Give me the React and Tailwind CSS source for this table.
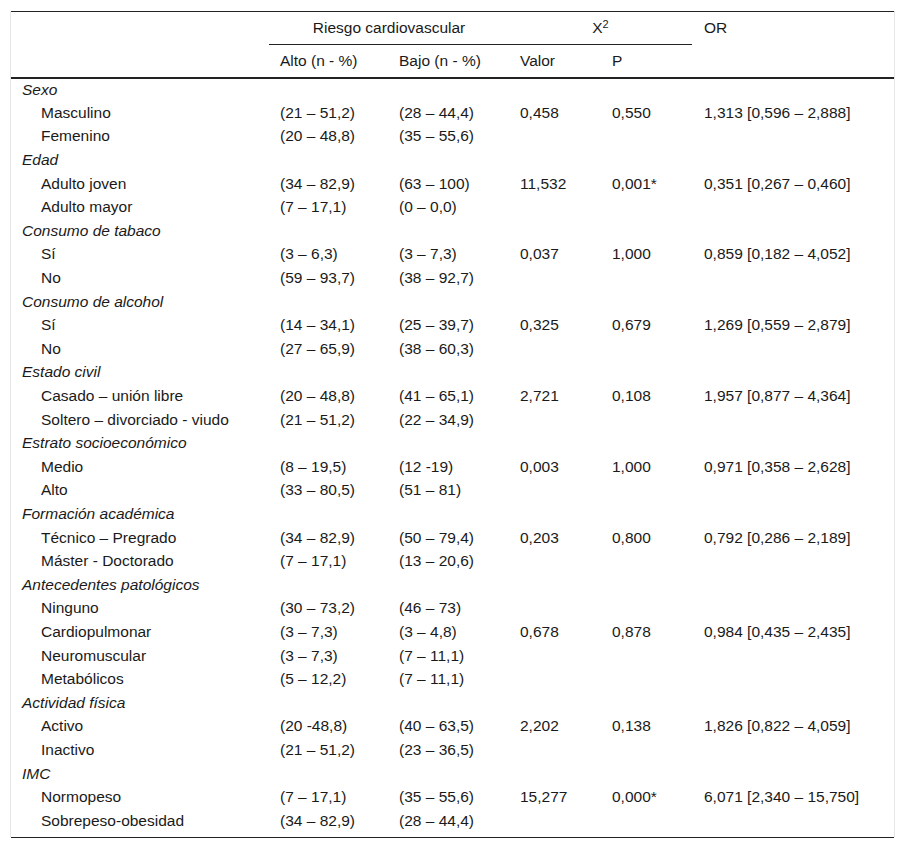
import React from "react";

const groups = [
  { title: "Sexo", rows: [
    ["Masculino", "(21 – 51,2)", "(28 – 44,4)", "0,458", "0,550", "1,313 [0,596 – 2,888]"],
    ["Femenino", "(20 – 48,8)", "(35 – 55,6)", "", "", ""],
  ]},
  { title: "Edad", rows: [
    ["Adulto joven", "(34 – 82,9)", "(63 – 100)", "11,532", "0,001*", "0,351 [0,267 – 0,460]"],
    ["Adulto mayor", "(7 – 17,1)", "(0 – 0,0)", "", "", ""],
  ]},
  { title: "Consumo de tabaco", rows: [
    ["Sí", "(3 – 6,3)", "(3 – 7,3)", "0,037", "1,000", "0,859 [0,182 – 4,052]"],
    ["No", "(59 – 93,7)", "(38 – 92,7)", "", "", ""],
  ]},
  { title: "Consumo de alcohol", rows: [
    ["Sí", "(14 – 34,1)", "(25 – 39,7)", "0,325", "0,679", "1,269 [0,559 – 2,879]"],
    ["No", "(27 – 65,9)", "(38 – 60,3)", "", "", ""],
  ]},
  { title: "Estado civil", rows: [
    ["Casado – unión libre", "(20 – 48,8)", "(41 – 65,1)", "2,721", "0,108", "1,957 [0,877 – 4,364]"],
    ["Soltero – divorciado - viudo", "(21 – 51,2)", "(22 – 34,9)", "", "", ""],
  ]},
  { title: "Estrato socioeconómico", rows: [
    ["Medio", "(8 – 19,5)", "(12 -19)", "0,003", "1,000", "0,971 [0,358 – 2,628]"],
    ["Alto", "(33 – 80,5)", "(51 – 81)", "", "", ""],
  ]},
  { title: "Formación académica", rows: [
    ["Técnico – Pregrado", "(34 – 82,9)", "(50 – 79,4)", "0,203", "0,800", "0,792 [0,286 – 2,189]"],
    ["Máster - Doctorado", "(7 – 17,1)", "(13 – 20,6)", "", "", ""],
  ]},
  { title: "Antecedentes patológicos", rows: [
    ["Ninguno", "(30 – 73,2)", "(46 – 73)", "", "", ""],
    ["Cardiopulmonar", "(3 – 7,3)", "(3 – 4,8)", "0,678", "0,878", "0,984 [0,435 – 2,435]"],
    ["Neuromuscular", "(3 – 7,3)", "(7 – 11,1)", "", "", ""],
    ["Metabólicos", "(5 – 12,2)", "(7 – 11,1)", "", "", ""],
  ]},
  { title: "Actividad física", rows: [
    ["Activo", "(20 -48,8)", "(40 – 63,5)", "2,202", "0,138", "1,826 [0,822 – 4,059]"],
    ["Inactivo", "(21 – 51,2)", "(23 – 36,5)", "", "", ""],
  ]},
  { title: "IMC", rows: [
    ["Normopeso", "(7 – 17,1)", "(35 – 55,6)", "15,277", "0,000*", "6,071 [2,340 – 15,750]"],
    ["Sobrepeso-obesidad", "(34 – 82,9)", "(28 – 44,4)", "", "", ""],
  ]},
];

export default function App() {
  return (
    <div className="bg-white w-[905px] h-[849px] pt-[11px] pl-[10px]" style={{ fontFamily: '"Liberation Sans", Arial, sans-serif' }}>
      <div className="w-[885px] border-x border-[#e6e6e6] text-[15.5px] text-[#1a1a1a] pb-[4px]">
        <table className="w-full table-fixed border-collapse">
          <colgroup>
            <col className="w-[258px]" />
            <col className="w-[119px]" />
            <col className="w-[121px]" />
            <col className="w-[92px]" />
            <col className="w-[91px]" />
            <col />
          </colgroup>
          <thead>
            <tr className="h-[33px] border-t border-[#222]">
              <th className="font-normal"></th>
              <th colSpan={2} className="font-normal text-center border-b border-[#222] align-middle leading-[16px]">Riesgo cardiovascular</th>
              <th colSpan={2} className="font-normal text-center border-b border-[#222] align-middle leading-[16px]">
                X<span className="text-[11px] relative -top-[5px] leading-none">2</span>
              </th>
              <th className="font-normal text-left pl-[12px] align-middle leading-[16px]">OR</th>
            </tr>
            <tr className="h-[33px] border-b-2 border-[#222]">
              <th className="font-normal"></th>
              <th className="font-normal text-left pl-[11px] leading-[16px]">Alto (n - %)</th>
              <th className="font-normal text-left pl-[11px] leading-[16px]">Bajo (n - %)</th>
              <th className="font-normal text-left pl-[11px] leading-[16px]">Valor</th>
              <th className="font-normal text-left pl-[11px] leading-[16px]">P</th>
              <th></th>
            </tr>
          </thead>
          <tbody>
            {groups.map((g) => (
              <React.Fragment key={g.title}>
                <tr className="h-[23.6px]">
                  <td className="italic pl-[11px] leading-[16px]">{g.title}</td>
                  <td></td><td></td><td></td><td></td><td></td>
                </tr>
                {g.rows.map((r, i) => (
                  <tr key={i} className="h-[23.6px]">
                    <td className="pl-[30px] leading-[16px] whitespace-nowrap">{r[0]}</td>
                    <td className="pl-[11px] leading-[16px] whitespace-nowrap">{r[1]}</td>
                    <td className="pl-[11px] leading-[16px] whitespace-nowrap">{r[2]}</td>
                    <td className="pl-[11px] leading-[16px] whitespace-nowrap">{r[3]}</td>
                    <td className="pl-[11px] leading-[16px] whitespace-nowrap">{r[4]}</td>
                    <td className="pl-[12px] leading-[16px] whitespace-nowrap">{r[5]}</td>
                  </tr>
                ))}
              </React.Fragment>
            ))}
          </tbody>
        </table>
      </div>
      <div className="w-[883px] ml-[1px] border-t border-[#222]"></div>
    </div>
  );
}
